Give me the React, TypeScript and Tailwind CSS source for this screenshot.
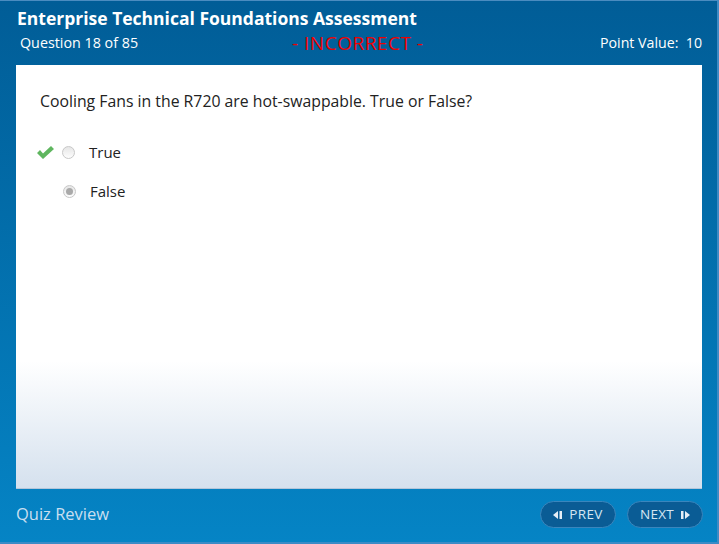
function Radio({ selected }: { selected?: boolean }) {
  return (
    <span className="flex h-[13px] w-[13px] items-center justify-center rounded-full border border-[#c8c8c8] bg-gradient-to-b from-[#e6e6e6] to-[#fdfdfd]">
      {selected && <span className="h-[7px] w-[7px] rounded-full bg-[#a9a9a9]" />}
    </span>
  )
}

function NavButton({ label, dir }: { label: string; dir: "prev" | "next" }) {
  return (
    <button className="flex h-[27px] w-[76px] items-center justify-center gap-[6px] rounded-full border border-[#3a86bd] bg-[#0a5c95] text-[13.5px] tracking-wide text-[#d6e6f2]">
      {dir === "prev" && (
        <svg width="10" height="10" viewBox="0 0 10 10" className="fill-[#e6eef6]">
          <polygon points="0,5 5,1 5,9" />
          <rect x="6.5" y="1" width="2.5" height="8" />
        </svg>
      )}
      <span>{label}</span>
      {dir === "next" && (
        <svg width="10" height="10" viewBox="0 0 10 10" className="fill-[#e6eef6]">
          <rect x="1" y="1" width="2.5" height="8" />
          <polygon points="5,1 10,5 5,9" />
        </svg>
      )}
    </button>
  )
}

export default function App() {
  return (
    <div className="flex h-[544px] w-[719px] flex-col overflow-hidden border-t border-r-2 border-b-2 border-t-[#4b8cc0] border-r-[#3f8bc4] border-b-[#3a8bc6] bg-gradient-to-b from-[#015d97] to-[#0584c5] font-['Open_Sans',sans-serif]">
      <div className="flex h-[64px] flex-col pl-[17px] pr-[15px] pt-[5px]">
        <h1 className="text-[17.5px] font-bold leading-[24px] text-white">Enterprise Technical Foundations Assessment</h1>
        <div className="mt-[2px] flex items-center text-white">
          <span className="w-[275px] pl-[3px] text-[14.3px]">Question 18 of 85</span>
          <span className="text-[19px] leading-[20px] tracking-[0.5px] text-[#f00000]">- INCORRECT -</span>
          <span className="ml-auto text-[14.2px]">Point Value:&nbsp; 10</span>
        </div>
      </div>
      <div className="ml-[16px] mr-[15px] flex h-[424px] flex-col border-b border-[#b4c6da] bg-gradient-to-b from-white from-[70%] to-[#d5e1ee] px-[24px] pt-[25px]">
        <p className="text-[15.8px] text-[#222]">Cooling Fans in the R720 are hot-swappable. True or False?</p>
        <div className="mt-[28px] flex flex-col gap-[17px] text-[15px] text-[#222]">
          <div className="-ml-[3px] flex h-[22px] items-center">
            <svg width="17" height="13" viewBox="0 0 17 13" className="mr-[8px] fill-[#5fb65f]">
              <polygon points="0,7 3,4 6,7.5 14,0 17,3 6,13" />
            </svg>
            <Radio />
            <span className="ml-[14px]">True</span>
          </div>
          <div className="ml-[23px] flex h-[22px] items-center">
            <Radio selected />
            <span className="ml-[14px]">False</span>
          </div>
        </div>
      </div>
      <div className="flex flex-1 items-center pl-[16px] pr-[14px] pb-[2px]">
        <span className="text-[16.5px] text-[#c9dff0]">Quiz Review</span>
        <div className="ml-auto flex gap-[11px]">
          <NavButton label="PREV" dir="prev" />
          <NavButton label="NEXT" dir="next" />
        </div>
      </div>
    </div>
  )
}
